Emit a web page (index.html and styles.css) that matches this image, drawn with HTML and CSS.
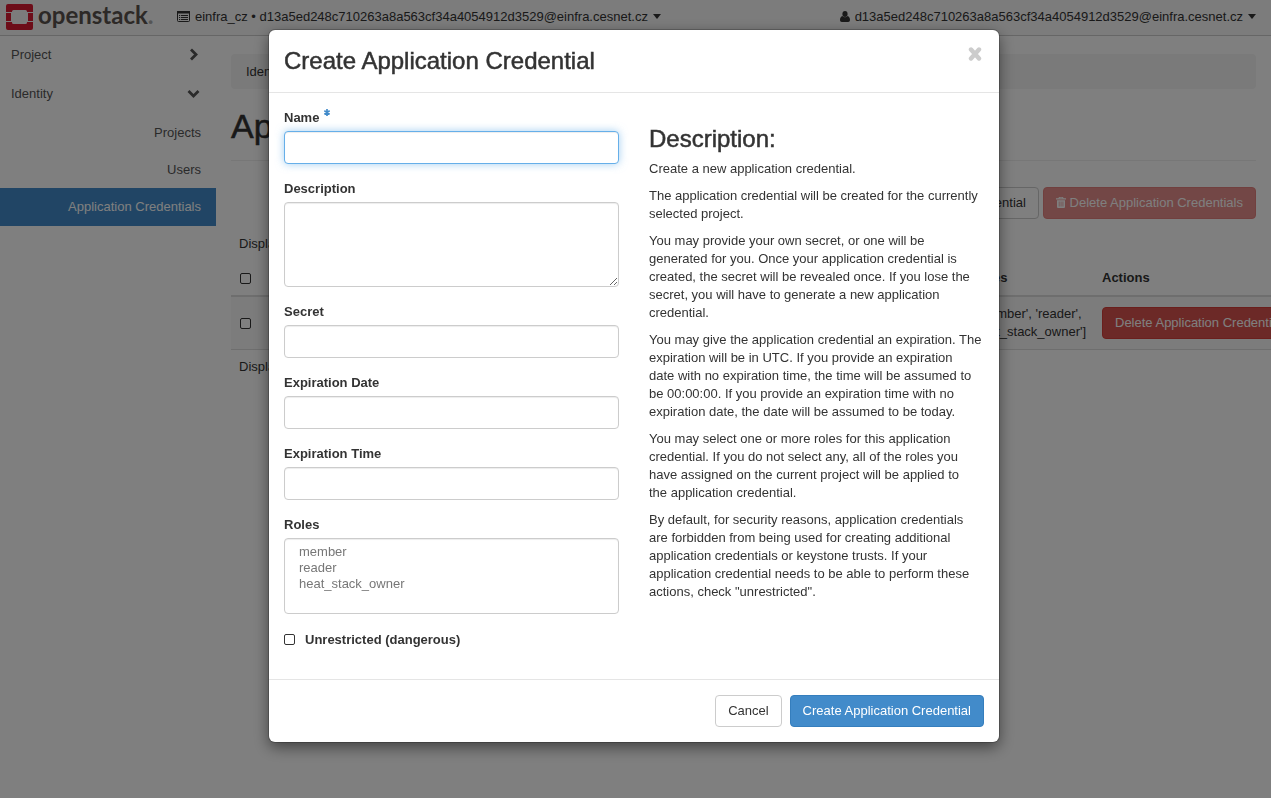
FILE: index.html
```html
<!DOCTYPE html>
<html lang="en">
<head>
<meta charset="utf-8">
<title>Application Credentials - OpenStack Dashboard</title>
<link rel="stylesheet" href="styles.css">
</head>
<body>
<div class="page">
  <header class="topbar">
    <a class="brand" href="#">
      <svg class="brand-mark" viewBox="0 0 27 26" aria-hidden="true">
        <path fill="#da1a32" d="M2 0h23a2 2 0 0 1 2 2v6h-6V7.500a1.500 1.500 0 0 0-1.500-1.500h-12A1.500 1.500 0 0 0 6 7.500V8H0V2a2 2 0 0 1 2-2zM0 9h5v8H0zM22 9h5v8h-5zM0 18h6v.5A1.500 1.500 0 0 0 7.500 20h12a1.500 1.500 0 0 0 1.500-1.500V18h6v6a2 2 0 0 1-2 2H2a2 2 0 0 1-2-2z"/>
      </svg>
      <span class="brand-name">openstack<span class="brand-dot">.</span></span>
    </a>
    <button class="nav-menu" type="button">
      <svg width="13" height="11" viewBox="0 0 13 11" aria-hidden="true">
        <rect x=".5" y=".5" width="12" height="10" rx="1" fill="none" stroke="#333"/>
        <path fill="#333" d="M0 0h13v2.500H0zM2 4h1.200v1H2zM4 4h7v1H4zM2 6h1.200v1H2zM4 6h7v1H4zM2 8h1.200v1H2zM4 8h7v1H4z"/>
      </svg>
      <span>einfra_cz • d13a5ed248c710263a8a563cf34a4054912d3529@einfra.cesnet.cz</span>
      <span class="caret"></span>
    </button>
    <button class="nav-menu nav-user" type="button">
      <svg width="10" height="11" viewBox="0 0 10 11" aria-hidden="true">
        <ellipse cx="5" cy="3" rx="2.600" ry="3" fill="#333"/>
        <path fill="#333" d="M2.500 5C.8 5.400 0 7 0 9c0 1.200.8 2 1.800 2h6.400C9.200 11 10 10.200 10 9c0-2-.8-3.600-2.500-4-.7.800-1.500 1.200-2.500 1.200S3.200 5.800 2.500 5z"/>
      </svg>
      <span>d13a5ed248c710263a8a563cf34a4054912d3529@einfra.cesnet.cz</span>
      <span class="caret"></span>
    </button>
  </header>

  <div class="layout">
    <nav class="sidebar">
      <a class="panel-group" href="#">Project
        <svg width="13" height="13" viewBox="0 0 13 13" aria-hidden="true"><path d="M4 1.500l5 5-5 5" fill="none" stroke="#555" stroke-width="2.800"/></svg>
      </a>
      <a class="panel-group" href="#">Identity
        <svg width="13" height="13" viewBox="0 0 13 13" aria-hidden="true"><path d="M1.500 4l5 5 5-5" fill="none" stroke="#555" stroke-width="2.800"/></svg>
      </a>
      <a class="panel" href="#">Projects</a>
      <a class="panel" href="#">Users</a>
      <a class="panel panel-active" href="#">Application Credentials</a>
    </nav>

    <main class="content">
      <div class="breadcrumb">Identity / Application Credentials</div>
      <h1>Application Credentials</h1>
      <div class="table-actions">
        <button class="btn" type="button">+ Create Application Credential</button>
        <button class="btn btn-danger" type="button" disabled>
          <svg class="trash" width="10" height="11" viewBox="0 0 10 11" aria-hidden="true">
            <path fill="#fff" fill-rule="evenodd" d="M3 0h4l.6 1.300H10v1.200H0V1.300h2.400zM3.400 1.300h3.200L6.300.8H3.700zM1 3.200h8V10a1 1 0 0 1-1 1H2a1 1 0 0 1-1-1zM2.800 4.400v5h.7v-5zm1.900 0v5h.7v-5zm1.900 0v5h.7v-5z"/>
          </svg>
          Delete Application Credentials
        </button>
      </div>
      <div class="count">Displaying 1 item</div>
      <table class="grid">
        <colgroup><col class="c-check"><col><col><col class="c-roles"><col class="c-actions"></colgroup>
        <thead>
          <tr>
            <th><input type="checkbox" aria-label="Select all"></th>
            <th>Name</th><th>Expiration</th><th>Roles</th><th>Actions</th>
          </tr>
        </thead>
        <tbody>
          <tr>
            <td><input type="checkbox" aria-label="Select row"></td>
            <td><a href="#">test</a></td><td>-</td>
            <td>['member', 'reader', 'heat_stack_owner']</td>
            <td><button class="btn btn-danger" type="button">Delete Application Credential</button></td>
          </tr>
        </tbody>
      </table>
      <div class="count">Displaying 1 item</div>
    </main>
  </div>
</div>

<div class="backdrop">
  <form class="modal" role="dialog" aria-labelledby="modal-title">
    <div class="modal-header">
      <h2 id="modal-title">Create Application Credential</h2>
      <button class="close" type="button" aria-label="Close">
        <svg width="14" height="14" viewBox="0 0 14 14" aria-hidden="true"><path d="M3 2.500l8 9M11 2.500l-8 9" stroke="#ccc" stroke-width="4.400" stroke-linecap="round"/></svg>
      </button>
    </div>
    <div class="modal-body">
      <div class="fields">
        <div class="field">
          <label for="name">Name <svg class="required" width="6" height="7" viewBox="0 0 6 7" aria-hidden="true"><path d="M3 0v7M.3 1.800l5.400 3.400M5.700 1.800L.3 5.200" stroke="#428bca" stroke-width="1.700"/></svg></label>
          <input class="control control-focus" id="name" type="text">
        </div>
        <div class="field">
          <label for="desc">Description</label>
          <textarea class="control" id="desc"></textarea>
        </div>
        <div class="field">
          <label for="secret">Secret</label>
          <input class="control" id="secret" type="text">
        </div>
        <div class="field">
          <label for="exp-date">Expiration Date</label>
          <input class="control" id="exp-date" type="text">
        </div>
        <div class="field">
          <label for="exp-time">Expiration Time</label>
          <input class="control" id="exp-time" type="text">
        </div>
        <div class="field">
          <label for="roles">Roles</label>
          <select class="control" id="roles" multiple>
            <option>member</option>
            <option>reader</option>
            <option>heat_stack_owner</option>
          </select>
        </div>
        <div class="check">
          <input id="unrestricted" type="checkbox">
          <label for="unrestricted">Unrestricted (dangerous)</label>
        </div>
      </div>
      <div class="help">
        <h3>Description:</h3>
        <p>Create a new application credential.</p>
        <p>The application credential will be created for the currently selected project.</p>
        <p>You may provide your own secret, or one will be generated for you. Once your application credential is created, the secret will be revealed once. If you lose the secret, you will have to generate a new application credential.</p>
        <p>You may give the application credential an expiration. The expiration will be in UTC. If you provide an expiration<br>date with no expiration time, the time will be assumed to be 00:00:00. If you provide an expiration time with no expiration date, the date will be assumed to be today.</p>
        <p>You may select one or more roles for this application credential. If you do not select any, all of the roles you have assigned on the current project will be applied to<br>the application credential.</p>
        <p>By default, for security reasons, application credentials are forbidden from being used for creating additional application credentials or keystone trusts. If your application credential needs to be able to perform these actions, check "unrestricted".</p>
      </div>
    </div>
    <div class="modal-footer">
      <button class="btn" type="button">Cancel</button>
      <button class="btn btn-primary" type="submit">Create Application Credential</button>
    </div>
  </form>
</div>
</body>
</html>
```
FILE: styles.css
```css
* { box-sizing: border-box; }

body {
  margin: 0;
  background: #fff;
  color: #333;
  font: 13px/18px "Liberation Sans", Arial, sans-serif;
}

h1, h2, h3 { margin: 0; font-weight: 500; -webkit-text-stroke: .5px currentColor; }
a { color: #337ab7; text-decoration: none; }
button, input, textarea, select { font: inherit; color: inherit; }

.page { min-height: 100vh; overflow: hidden; }

/* Top bar */
.topbar {
  display: flex;
  align-items: center;
  height: 36px;
  padding: 0 15px 2px 6px;
  background: #f8f8f8;
  border-bottom: 1px solid #ccc;
}
.brand { display: flex; align-items: center; gap: 5px; width: 171px; }
.brand-mark { width: 27px; height: 26px; }
.brand-name {
  padding-bottom: 3px;
  color: #5a534e;
  font: 700 24px/26px Lato, "Open Sans", sans-serif;
}
.brand-dot { color: #aaa; }
.nav-menu {
  display: flex;
  align-items: center;
  gap: 5px;
  padding: 0;
  border: 0;
  background: none;
  white-space: nowrap;
}
.nav-user { margin-left: auto; }
.caret {
  border: 4px solid transparent;
  border-top: 5px solid #333;
  border-bottom: 0;
}

/* Sidebar */
.layout { display: flex; }
.sidebar { flex: 0 0 216px; }
.panel-group {
  display: flex;
  align-items: center;
  justify-content: space-between;
  height: 39px;
  padding: 0 16px 2px 11px;
  color: #555;
}
.panel {
  display: block;
  padding: 10px 15px;
  line-height: 17px;
  color: #555;
  text-align: right;
}
.panel-active { padding-bottom: 11px; background: #428bca; color: #fff; }

/* Content */
.content { flex: 1; min-width: 0; padding: 18px 15px; }
.breadcrumb {
  padding: 9px 15px 8px;
  border-radius: 4px;
  background: #f5f5f5;
}
h1 {
  margin-top: 18px;
  padding-bottom: 15px;
  border-bottom: 1px solid #eee;
  font-size: 34px;
  line-height: 38px;
}
.table-actions {
  display: flex;
  justify-content: flex-end;
  gap: 4px;
  margin: 26px 0 16px;
}
.trash { vertical-align: -1px; }
.count { padding: 0 8px; }
.grid {
  width: 1075px;
  margin: 8px 0;
  border-collapse: collapse;
  table-layout: fixed;
}
.grid th, .grid td { padding: 8px; text-align: left; }
.grid th { border-bottom: 2px solid #ddd; }
.grid td { border-bottom: 1px solid #ddd; }
.grid tbody tr { background: #f9f9f9; }
.c-check { width: 31px; }
.c-roles { width: 130px; }
.c-actions { width: 212px; }

/* Controls */
.btn {
  padding: 6px 12px;
  border: 1px solid #ccc;
  border-radius: 4px;
  background: #fff;
  white-space: nowrap;
}
.btn-danger { border-color: #d43f3a; background: #d9534f; color: #fff; }
.btn-danger:disabled { opacity: .65; }
.btn-primary { border-color: #357ebd; background: #428bca; color: #fff; }

input[type="checkbox"] {
  display: block;
  flex: none;
  appearance: none;
  width: 11px;
  height: 11px;
  margin: 0 1px;
  border: 1px solid #333;
  border-radius: 2px;
  background: #fff;
}
.control {
  display: block;
  width: 100%;
  height: 33px;
  padding: 6px 12px;
  border: 1px solid #ccc;
  border-radius: 4px;
  background: #fff;
  box-shadow: inset 0 1px 1px rgba(0, 0, 0, .075);
  color: #777;
}
.control-focus {
  border-color: #66afe9;
  box-shadow: inset 0 1px 1px rgba(0, 0, 0, .075), 0 0 8px rgba(102, 175, 233, .6);
}
textarea.control { height: 85px; resize: both; }
select.control { height: 76px; padding-top: 5px; }

/* Modal */
.backdrop {
  position: fixed;
  inset: 0;
  padding: 30px 3px 30px 0;
  overflow: hidden;
  background: rgba(0, 0, 0, .5);
}
.modal {
  max-width: 730px;
  margin: 0 auto;
  border-radius: 6px;
  background: #fff;
  box-shadow: 0 0 0 1px rgba(0, 0, 0, .2), 0 5px 15px rgba(0, 0, 0, .5);
}
.modal-header {
  display: flex;
  justify-content: space-between;
  align-items: flex-start;
  padding: 15px;
  border-bottom: 1px solid #e5e5e5;
}
.modal-header h2 { font-size: 24px; line-height: 32px; }
.close { display: flex; padding: 2px; border: 0; background: none; }
.modal-body {
  display: grid;
  grid-template-columns: 1fr 1fr;
  gap: 30px;
  padding: 16px 15px 30px;
}
.field { margin-bottom: 16px; }
.field label { display: block; margin-bottom: 4px; font-weight: 700; }
.required { margin-left: 1px; vertical-align: 6px; }
.check { display: flex; gap: 10px; padding-top: 1px; font-weight: 700; }
.check input[type="checkbox"] { margin: 3px 0 0; }
.help h3 { margin: 18px 0 9px; font-size: 24px; line-height: 24px; }
.help p { margin: 0 0 9px; }
.modal-footer {
  display: flex;
  justify-content: flex-end;
  gap: 8px;
  padding: 15px;
  border-top: 1px solid #e5e5e5;
}
```
